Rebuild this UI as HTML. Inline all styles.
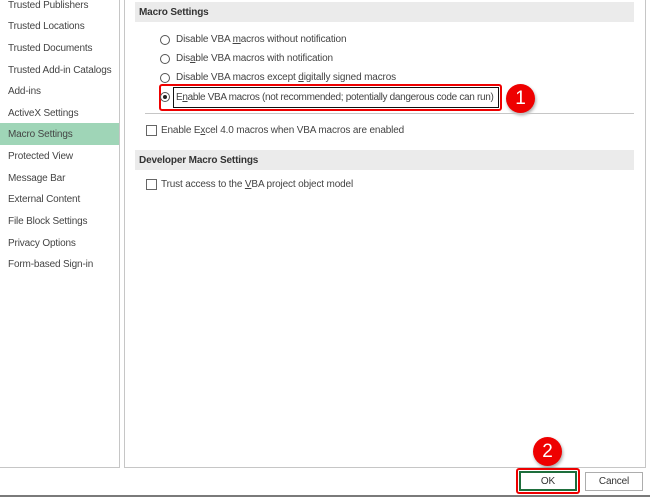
<!DOCTYPE html>
<html><head><style>
*{margin:0;padding:0;box-sizing:border-box}
body{width:650px;height:497px;background:#fff;font-family:"Liberation Sans",sans-serif;font-size:10px;letter-spacing:-0.15px;color:#444;position:relative;overflow:hidden}
.a{position:absolute;white-space:nowrap}
.side{left:0;top:-2px;width:120px;height:470px;border-right:1px solid #c6c6c6;border-bottom:1px solid #c6c6c6}
.it{position:absolute;left:0;width:119px;height:22px;line-height:22px;padding-left:8px}
.sel{background:#9fd5b7}
.main{left:124px;top:-2px;width:522px;height:470px;border-left:1px solid #c6c6c6;border-right:1px solid #c6c6c6;border-bottom:1px solid #c6c6c6}
.hd{left:135px;width:499px;height:20px;background:#ebebeb;font-weight:bold;line-height:20px;padding-left:4px;color:#333}
.rad{width:10px;height:10px;border:1px solid #555;border-radius:50%;background:#fff}
.cb{width:11px;height:11px;border:1px solid #666;background:#fff}
.circ{width:29px;height:29px;border-radius:50%;background:#e00;color:#fff;font-size:19px;text-align:center;line-height:29px;box-shadow:1px 2px 3px rgba(0,0,0,.35)}
.btn{border:1px solid #adadad;background:#fff;text-align:center;line-height:17px;color:#333}
</style></head><body>
<div class="a side">
<div class="it" style="top:-3px">Trusted Publishers</div>
<div class="it" style="top:18px">Trusted Locations</div>
<div class="it" style="top:40px">Trusted Documents</div>
<div class="it" style="top:62px">Trusted Add-in Catalogs</div>
<div class="it" style="top:83px">Add-ins</div>
<div class="it" style="top:105px">ActiveX Settings</div>
<div class="it sel" style="top:125px;line-height:24px">Macro Settings</div>
<div class="it" style="top:148px">Protected View</div>
<div class="it" style="top:170px">Message Bar</div>
<div class="it" style="top:191px">External Content</div>
<div class="it" style="top:213px">File Block Settings</div>
<div class="it" style="top:235px">Privacy Options</div>
<div class="it" style="top:256px">Form-based Sign-in</div>
</div>
<div class="a main"></div>
<div class="a hd" style="top:2px;line-height:21px">Macro Settings</div>
<div class="a rad" style="left:160px;top:35px"></div><div class="a" style="left:176px;top:34px">Disable VBA <u>m</u>acros without notification</div>
<div class="a rad" style="left:160px;top:54px"></div><div class="a" style="left:176px;top:53px">Dis<u>a</u>ble VBA macros with notification</div>
<div class="a rad" style="left:160px;top:73px"></div><div class="a" style="left:176px;top:72px">Disable VBA macros except <u>d</u>igitally signed macros</div>
<div class="a" style="left:159px;top:84px;width:343px;height:27px;border:2px solid #e00;border-radius:3px"></div>
<div class="a" style="left:173px;top:87px;width:326px;height:21px;border:1.5px solid #111"></div>
<div class="a rad" style="left:160px;top:92px"><div style="width:4px;height:4px;background:#222;border-radius:50%;margin:2px"></div></div>
<div class="a" style="left:176px;top:92px;letter-spacing:-0.32px">E<u>n</u>able VBA macros (not recommended; potentially dangerous code can run)</div>
<div class="a circ" style="left:506px;top:84px">1</div>
<div class="a" style="left:145px;top:113px;width:489px;height:1px;background:#c6c6c6"></div>
<div class="a cb" style="left:146px;top:125px"></div><div class="a" style="left:161px;top:125px">Enable E<u>x</u>cel 4.0 macros when VBA macros are enabled</div>
<div class="a hd" style="top:150px;line-height:21px">Developer Macro Settings</div>
<div class="a cb" style="left:146px;top:179px"></div><div class="a" style="left:161px;top:179px">Trust access to the <u>V</u>BA project object model</div>
<div class="a circ" style="left:533px;top:437px">2</div>
<div class="a" style="left:516px;top:468px;width:64px;height:26px;border:2px solid #e00;border-radius:3px"></div>
<div class="a btn" style="left:519px;top:471px;width:58px;height:20px;border:2px solid #1e6e3c">OK</div>
<div class="a btn" style="left:585px;top:472px;width:58px;height:19px">Cancel</div>
<div class="a" style="left:0;top:495px;width:650px;height:2px;background:#7a7a7a"></div>
</body></html>
